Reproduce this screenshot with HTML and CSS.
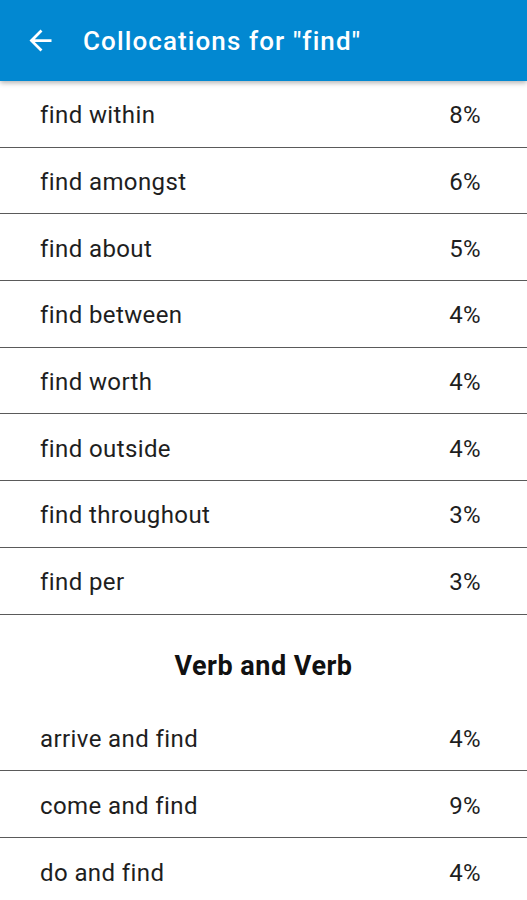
FILE: index.html
```html
<!DOCTYPE html>
<html>
<head>
<meta charset="utf-8">
<link rel="stylesheet" href="styles.css">
</head>
<body>
<header class="appbar">
  <svg class="back" viewBox="0 0 24 24"><path d="M20 11H7.83l5.59-5.59L12 4l-8 8 8 8 1.41-1.41L7.83 13H20v-2z" fill="#fff"/></svg>
  <h1 class="title">Collocations for "find"</h1>
</header>
<main class="list">
  <div class="row"><span>find within</span><span class="pct">8%</span></div>
  <div class="row"><span>find amongst</span><span class="pct">6%</span></div>
  <div class="row"><span>find about</span><span class="pct">5%</span></div>
  <div class="row"><span>find between</span><span class="pct">4%</span></div>
  <div class="row"><span>find worth</span><span class="pct">4%</span></div>
  <div class="row"><span>find outside</span><span class="pct">4%</span></div>
  <div class="row"><span>find throughout</span><span class="pct">3%</span></div>
  <div class="row"><span>find per</span><span class="pct">3%</span></div>
  <h2 class="section">Verb and Verb</h2>
  <div class="row"><span>arrive and find</span><span class="pct">4%</span></div>
  <div class="row"><span>come and find</span><span class="pct">9%</span></div>
  <div class="row"><span>do and find</span><span class="pct">4%</span></div>
</main>
</body>
</html>
```
FILE: styles.css
```css
html, body {
  margin: 0;
  padding: 0;
  background: #fff;
  font-family: Roboto, "Noto Sans", sans-serif;
  color: #1e1e1e;
}
.appbar {
  height: 81px;
  background: #0288d1;
  display: flex;
  align-items: center;
  padding-left: 24px;
  box-shadow: 0 2px 5px rgba(0,0,0,0.3);
  position: relative;
  z-index: 1;
}
.back {
  width: 33px;
  height: 33px;
  flex: none;
}
.title {
  margin: 0 0 0 26px;
  color: #fff;
  font-size: 26px;
  font-weight: 500;
  letter-spacing: 1.1px;
}
.list {
  display: flex;
  flex-direction: column;
}
.row {
  box-sizing: border-box;
  height: 66.7px;
  flex: none;
  display: flex;
  align-items: center;
  justify-content: space-between;
  padding: 3px 46px 0 40px;
  font-size: 24px;
  letter-spacing: 0.4px;
  border-bottom: 1px solid #5a5a5a;
}
.row:last-child { border-bottom: none; }
.section {
  box-sizing: border-box;
  margin: 0;
  height: 90.25px;
  flex: none;
  padding-top: 12px;
  display: flex;
  align-items: center;
  justify-content: center;
  font-size: 27px;
  font-weight: 700;
  letter-spacing: 0.5px;
  color: #111;
}
```
